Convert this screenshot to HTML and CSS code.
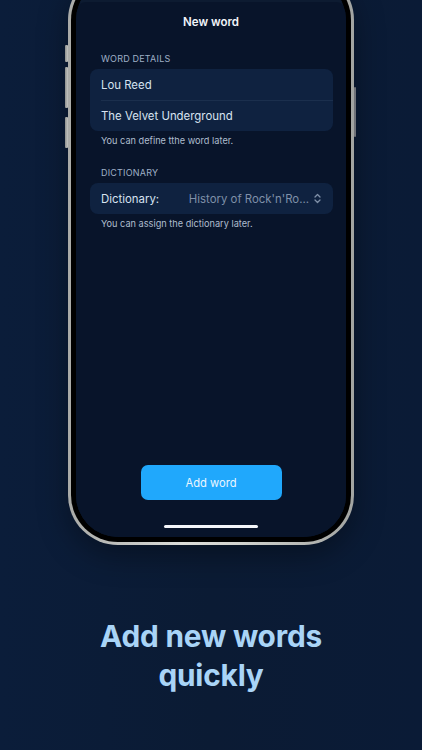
FILE: index.html
```html
<!DOCTYPE html>
<html lang="en">
<head>
<meta charset="utf-8">
<title>New word</title>
<link rel="stylesheet" href="styles.css">
</head>
<body>
<div class="stage">
  <div class="phone">
    <div class="btn-side btn-l1"></div>
    <div class="btn-side btn-l2"></div>
    <div class="btn-side btn-l3"></div>
    <div class="btn-side btn-r1"></div>
    <div class="bezel">
      <div class="screen">
        <div class="under"></div>
        <div class="sheet">
          <div class="title">New word</div>
          <div class="section">
            <div class="sec-head">WORD DETAILS</div>
            <div class="card">
              <div class="row">Lou Reed</div>
              <div class="row row-sep">The Velvet Underground</div>
            </div>
            <div class="sec-foot">You can define tthe word later.</div>
          </div>
          <div class="section section-2">
            <div class="sec-head">DICTIONARY</div>
            <div class="card">
              <div class="row row-pick">
                <span class="label">Dictionary:</span>
                <span class="value">History of Rock'n'Ro...</span>
                <svg class="updown" width="7" height="11" viewBox="0 0 7 11" aria-hidden="true">
                  <path d="M1 4 L3.5 1.5 L6 4" fill="none" stroke="#7f90a8" stroke-width="1.3" stroke-linecap="round" stroke-linejoin="round"/>
                  <path d="M1 7 L3.5 9.5 L6 7" fill="none" stroke="#7f90a8" stroke-width="1.3" stroke-linecap="round" stroke-linejoin="round"/>
                </svg>
              </div>
            </div>
            <div class="sec-foot">You can assign the dictionary later.</div>
          </div>
          <div class="spacer"></div>
          <div class="add-btn">Add word</div>
          <div class="home"></div>
        </div>
      </div>
    </div>
  </div>
  <h1 class="headline">Add new words<br>quickly</h1>
</div>
</body>
</html>
```

FILE: styles.css
```css
* { box-sizing: border-box; }
html, body {
  margin: 0;
  padding: 0;
  width: 422px;
  height: 750px;
  overflow: hidden;
}
body {
  background: linear-gradient(90deg, #0b1d3a 0%, #0b1b34 50%, #0a1b36 100%);
  font-family: Inter, "Noto Sans", "Liberation Sans", sans-serif;
}
.stage {
  display: flex;
  flex-direction: column;
  align-items: center;
}
.phone {
  position: relative;
  width: 286px;
  height: 575px;
  margin-top: -30px;
  border-radius: 50px;
  padding: 3px;
  background: linear-gradient(90deg, #a9aaa7 0%, #dcddda 40%, #d2d3cf 60%, #a2a4a1 100%);
  box-shadow: 0 10px 30px rgba(0,0,0,0.35);
}
.btn-side {
  position: absolute;
  width: 3px;
  background: linear-gradient(90deg, #8d8f8d, #c4c5c2);
  border-radius: 1px;
}
.btn-l1 { left: -3px; top: 75px; height: 17px; }
.btn-l2 { left: -3px; top: 97px; height: 41px; }
.btn-l3 { left: -3px; top: 147px; height: 31px; }
.btn-r1 { right: -2px; top: 117px; height: 50px; width: 2px; background: #6f7278; }
.bezel {
  height: 100%;
  border-radius: 47px;
  background: #000;
  padding: 5px;
}
.screen {
  height: 100%;
  border-radius: 42px;
  background: #0c1a30;
  overflow: hidden;
  display: flex;
  flex-direction: column;
}
.under {
  height: 24px;
  flex: none;
  background: #0d1b31;
}
.sheet {
  flex: 1;
  display: flex;
  flex-direction: column;
  background: #08142a;
  border-radius: 10px 10px 0 0;
}
.title {
  text-align: center;
  color: #f2f5fa;
  font-size: 11.5px;
  font-weight: 600;
  line-height: 16px;
  padding-top: 12px;
}
.section {
  padding: 0 13px 0 14px;
  margin-top: 23px;
}
.section-2 { margin-top: 20px; }
.sec-head {
  color: #9fb0c6;
  font-size: 9px;
  line-height: 12px;
  letter-spacing: 0.2px;
  padding-left: 11px;
  margin-bottom: 4px;
}
.card {
  background: #0f2240;
  border-radius: 8px;
  overflow: hidden;
}
.row {
  height: 31px;
  display: flex;
  align-items: center;
  padding: 0 12px 0 11px;
  color: #d7e3f1;
  font-size: 11.4px;
}
.row-sep {
  position: relative;
}
.row-sep::before {
  content: "";
  position: absolute;
  left: 11px;
  right: 0;
  top: 0;
  height: 1px;
  background: #1b2f4d;
}
.row-pick .label { flex: 1; }
.row-pick .value {
  color: #7f90a8;
  font-size: 11.4px;
  margin-right: 5px;
}
.updown { flex: none; }
.sec-foot {
  color: #aebdce;
  font-size: 9.2px;
  line-height: 12px;
  padding-left: 11px;
  margin-top: 4px;
}
.spacer { flex: 1; }
.add-btn {
  align-self: center;
  width: 141px;
  height: 35px;
  border-radius: 7px;
  background: #20a8fc;
  color: #eaf6ff;
  font-size: 11.2px;
  display: flex;
  align-items: center;
  justify-content: center;
}
.home {
  align-self: center;
  width: 94px;
  height: 3px;
  border-radius: 2px;
  background: #f4f6fa;
  margin-top: 25px;
  margin-bottom: 9px;
}
.headline {
  margin: 72px 0 0;
  text-align: center;
  color: #a9d4f7;
  font-size: 29.8px;
  line-height: 39px;
  font-weight: 700;
  letter-spacing: -0.2px;
}
```
